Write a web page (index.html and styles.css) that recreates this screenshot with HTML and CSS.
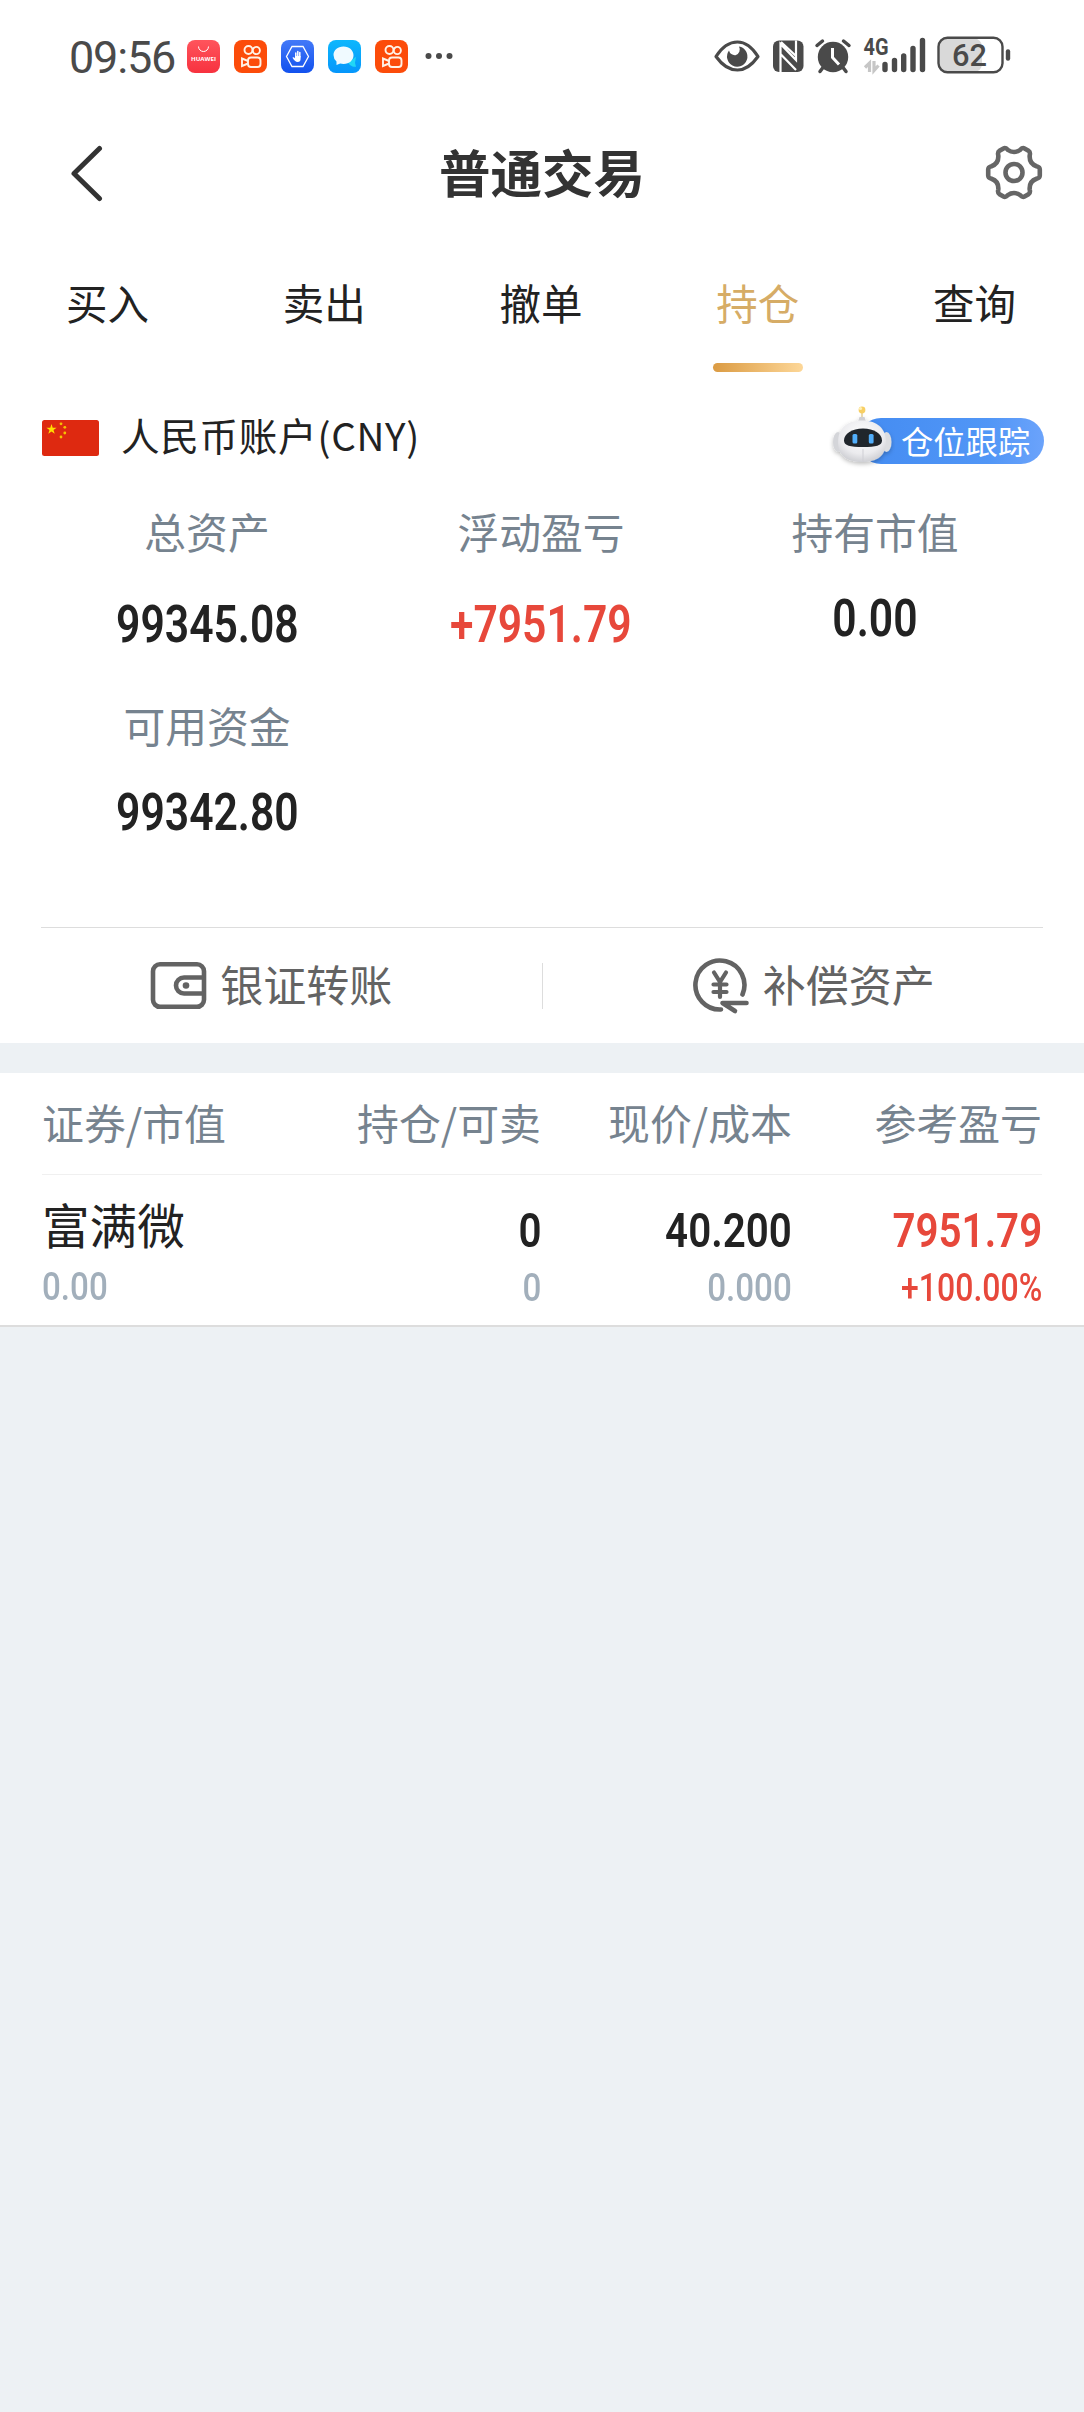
FILE: index.html
```html
<!DOCTYPE html>
<html lang="zh-CN">
<head>
  <meta charset="UTF-8">
  <title>普通交易</title>
  <meta name="viewport" content="width=device-width, initial-scale=1.0">
  <link rel="stylesheet" href="styles.css">
</head>
<body>

  <!-- Status bar -->
  <div class="status-bar">
    <span class="time">09:56</span>
    <div class="apps">
      <svg width="33" height="33" viewBox="0 0 33 33">
        <defs><linearGradient id="hw" x1="0" y1="0" x2="0" y2="1"><stop offset="0" stop-color="#ff545c"/><stop offset="1" stop-color="#f7323f"/></linearGradient></defs>
        <rect width="33" height="33" rx="8" fill="url(#hw)"/>
        <path d="M11.5 6.500a5 5 0 0 0 10 0" fill="none" stroke="#fff" stroke-width="1"/>
        <text x="16.500" y="21" class="app-text" text-anchor="middle" textLength="25" lengthAdjust="spacingAndGlyphs">HUAWEI</text>
      </svg>
      <svg width="33" height="33" viewBox="0 0 33 33">
        <rect width="33" height="33" rx="8" fill="#fc4c0a"/>
        <g fill="none" stroke="#fff2e6" stroke-width="1.900"><circle cx="14.500" cy="10" r="4"/><circle cx="22.300" cy="10.500" r="3.600"/><rect x="14" y="17.500" width="12.500" height="9.500" rx="3"/><path d="M14 21l-6-2.500v7.500l6-2.500"/></g>
      </svg>
      <svg width="33" height="33" viewBox="0 0 33 33">
        <defs><linearGradient id="hd" x1="0" y1="0" x2="0" y2="1"><stop offset="0" stop-color="#4379f8"/><stop offset="1" stop-color="#1251ee"/></linearGradient></defs>
        <rect width="33" height="33" rx="8" fill="url(#hd)"/>
        <path d="M11 6.500h11l5.500 10-5.500 10H11l-5.500-10z" fill="none" stroke="#fff" stroke-width="1.300"/>
        <path d="M14.800 17v-4M16.800 16v-4.500M18.800 17v-4.500" stroke="#fff" stroke-width="1.500" stroke-linecap="round"/>
        <path d="M14 16h5.600v3c0 2-1 3-2.800 3-2.200 0-3.800-1.800-5.300-4.300 1-.8 1.700-.2 2.500.6z" fill="#fff"/>
      </svg>
      <svg width="33" height="33" viewBox="0 0 33 33">
        <defs><linearGradient id="ms" x1="0" y1="0" x2="0" y2="1"><stop offset="0" stop-color="#0db7fd"/><stop offset="1" stop-color="#0596fb"/></linearGradient></defs>
        <rect width="33" height="33" rx="8" fill="url(#ms)"/>
        <path d="M22 25c2 1.500 4 2 6 1.800l-1-4 1-6-8 6z" fill="#21d6f6"/>
        <path d="M15.500 6.500c6 0 10 4 10 8.800s-4 8.700-10 8.700c-1.200 0-2.300-.2-3.300-.5L8.500 25v-3.500A8.700 8.700 0 0 1 5.500 15c0-4.700 4-8.500 10-8.500z" fill="#f0faff"/>
      </svg>
      <svg width="33" height="33" viewBox="0 0 33 33">
        <rect width="33" height="33" rx="8" fill="#fc4c0a"/>
        <g fill="none" stroke="#fff2e6" stroke-width="1.900"><circle cx="14.500" cy="10" r="4"/><circle cx="22.300" cy="10.500" r="3.600"/><rect x="14" y="17.500" width="12.500" height="9.500" rx="3"/><path d="M14 21l-6-2.500v7.500l6-2.500"/></g>
      </svg>
    </div>
    <svg class="more" width="28" height="8" viewBox="0 0 28 8"><g fill="#4a4a4a"><circle cx="3.500" cy="4" r="3"/><circle cx="14" cy="4" r="3"/><circle cx="24.500" cy="4" r="3"/></g></svg>
    <svg class="system" width="298" height="56" viewBox="0 -8 298 56">
      <!-- eye -->
      <path d="M2 20.500C8 11 15 6 23.500 6S38 11 44 20.500C38 29 32 34 23.500 34S8 29 2 20.500z" fill="none" stroke="#4a4a4a" stroke-width="3.200" stroke-linejoin="round"/>
      <path d="M15 14.500a10.200 10.200 0 1 0 10-4 6 6 0 0 1-3.500 8.700 6 6 0 0 1-6.500-4.700z" fill="#4a4a4a"/>
      <!-- nfc -->
      <rect x="59" y="4.500" width="30.500" height="31.500" rx="6" fill="#4a4a4a"/>
      <path d="M66.500 36V8l15.500 16V4.500M67 6l15 14M66.500 18l15.500 16" fill="none" stroke="#fff" stroke-width="2.200"/>
      <!-- alarm -->
      <circle cx="119" cy="21" r="15.200" fill="#4a4a4a"/>
      <path d="M103 9.500l5.500-4.500M135 9.500L129.500 5M109 31.500l-3 4M129 31.500l3 4" stroke="#4a4a4a" stroke-width="3.500" stroke-linecap="round"/>
      <path d="M118.500 12v9.500l6.500 7" fill="none" stroke="#fff" stroke-width="3"/>
      <!-- signal -->
      <text x="149.500" y="19" class="net" textLength="25" lengthAdjust="spacingAndGlyphs">4G</text>
      <path d="M155.500 36V27l-4.500 4.500M160 25v9.500l4.500-5" fill="none" stroke="#c6c6c6" stroke-width="3.200"/>
      <path d="M171 28.500v5M180.500 24.500v9M189.700 20v13.500M199 12.500v21M208.500 4.500v29" stroke="#4a4a4a" stroke-width="5.400" stroke-linecap="round"/>
      <!-- battery -->
      <rect x="225" y="2.500" width="43" height="33.500" rx="8" fill="#d9d9d9"/>
      <rect x="224.500" y="1.800" width="64" height="34.500" rx="9" fill="none" stroke="#4a4a4a" stroke-width="2.400"/>
      <path d="M294 15.500v7" stroke="#4a4a4a" stroke-width="4.400" stroke-linecap="round"/>
      <text x="238" y="30" class="battery" textLength="35" lengthAdjust="spacingAndGlyphs">62</text>
    </svg>
  </div>

  <!-- Title -->
  <div class="header">
    <svg width="34" height="60" viewBox="0 0 34 60"><path d="M30.500 5.500L5 30.500l25.500 25" fill="none" stroke="#333" stroke-width="5" stroke-linecap="round" stroke-linejoin="round"/></svg>
    <h1>普通交易</h1>
    <svg width="60" height="60" viewBox="0 0 60 60">
      <g fill="none" stroke="#666" stroke-width="4.600" stroke-linejoin="round">
        <path d="M19.500 5.500C21.500 4.400 22.500 5.500 24 7C27.500 9.600 32.500 9.600 36 7C37.500 5.500 38.500 4.400 40.500 5.500L44.500 7.800C46.500 9 46.200 10.500 45.700 12.500C45.300 18 47.500 21.500 52.500 23.200C54.500 23.800 55.800 24.200 55.800 26.500V32.500C55.800 34.800 54.500 35.200 52.500 35.800C47.500 37.500 45.300 41 45.700 46.500C46.200 48.500 46.500 50 44.500 51.200L40.500 53.500C38.500 54.600 37.500 53.500 36 52C32.500 49.400 27.500 49.400 24 52C22.500 53.500 21.500 54.600 19.500 53.500L15.500 51.200C13.500 50 13.800 48.500 14.300 46.500C14.700 41 12.500 37.500 7.500 35.800C5.500 35.200 4.200 34.800 4.200 32.500V26.500C4.200 24.200 5.500 23.800 7.500 23.200C12.500 21.500 14.700 18 14.300 12.500C13.800 10.500 13.500 9 15.500 7.800Z"/>
        <circle cx="30" cy="29.500" r="8.500"/>
      </g>
    </svg>
  </div>

  <!-- Tabs -->
  <div class="tabs">
    <div class="tab">买入</div>
    <div class="tab">卖出</div>
    <div class="tab">撤单</div>
    <div class="tab active">持仓</div>
    <div class="tab">查询</div>
  </div>

  <!-- Account -->
  <div class="account">
    <svg width="57" height="36" viewBox="0 0 57 36">
      <rect width="57" height="36" rx="2.500" fill="#de2910"/>
      <path d="M9.500 4l1.200 3.700h3.900l-3.100 2.300 1.200 3.800-3.200-2.300-3.200 2.300 1.200-3.800-3.100-2.300h3.900z" fill="#ffde00"/>
      <g fill="#f5c400"><circle cx="19" cy="3.800" r="1.400"/><circle cx="22.800" cy="7.300" r="1.400"/><circle cx="22.800" cy="13" r="1.400"/><circle cx="19" cy="17" r="1.400"/></g>
    </svg>
    <span class="account-name">人民币账户(CNY)</span>
    <div class="track">
      <svg class="robot" width="66" height="70" viewBox="0 0 66 70">
        <defs>
          <radialGradient id="head" cx=".5" cy=".35" r=".7"><stop offset="0" stop-color="#fff"/><stop offset=".65" stop-color="#ebebee"/><stop offset="1" stop-color="#c8c9ce"/></radialGradient>
          <filter id="soft" x="-20%" y="-20%" width="140%" height="150%"><feDropShadow dx="0" dy="2" stdDeviation="2" flood-opacity=".25"/></filter>
        </defs>
        <g filter="url(#soft)">
          <ellipse cx="9" cy="39" rx="5" ry="10" fill="#d4d5d9"/>
          <ellipse cx="57.500" cy="39" rx="5" ry="10" fill="#dcdde0"/>
          <path d="M29 19l1.500-5h5l1.500 5z" fill="#d0d0d4"/>
          <path d="M33 17.500c16 0 24 9 24 21.500 0 14-9 20-24 20S9 53 9 39c0-12.500 8-21.500 24-21.500z" fill="url(#head)"/>
        </g>
        <path d="M33 10v4" stroke="#e9d9b0" stroke-width="2"/>
        <circle cx="33" cy="7" r="3.400" fill="#f8cf63"/><circle cx="31.500" cy="5.500" r="1.600" fill="#fff0b8"/>
        <path d="M34 25.500c11 0 19 5 19 12 0 5-6 6.500-19 6.500s-19-1.500-19-6.500c0-7 8-12 19-12z" fill="#20262c"/>
        <rect x="23.500" y="31" width="4.800" height="9.500" rx="1.500" fill="#51aefb"/><rect x="39.800" y="31" width="4.800" height="9.500" rx="1.500" fill="#51aefb"/>
        <path d="M34 46v12.500" stroke="#cfcfd4" stroke-width="1"/>
      </svg>
      <span>仓位跟踪</span>
    </div>
  </div>

  <!-- Summary -->
  <div class="summary">
    <div class="item">
      <div class="label">总资产</div>
      <div class="value"><span class="num">99345.08</span></div>
    </div>
    <div class="item">
      <div class="label">浮动盈亏</div>
      <div class="value red"><span class="num">+7951.79</span></div>
    </div>
    <div class="item tight">
      <div class="label">持有市值</div>
      <div class="value"><span class="num">0.00</span></div>
    </div>
    <div class="item tight">
      <div class="label">可用资金</div>
      <div class="value"><span class="num">99342.80</span></div>
    </div>
  </div>

  <!-- Actions -->
  <div class="divider"></div>
  <div class="actions">
    <div class="action">
      <svg width="58" height="58" viewBox="0 0 58 58">
        <g fill="none" stroke="#636363" stroke-width="4.600"><rect x="4" y="7.300" width="51" height="42.500" rx="7"/><path d="M54.500 20.500H35a8 8 0 0 0 0 16h19.500"/></g>
        <circle cx="37" cy="28.500" r="3.300" fill="#636363"/>
      </svg>
      <span>银证转账</span>
    </div>
    <div class="action">
      <svg width="58" height="58" viewBox="0 0 58 58">
        <g fill="none" stroke="#636363" stroke-width="4.600" stroke-linecap="round" stroke-linejoin="round">
          <path d="M29 52.500A24.500 24.500 0 1 1 50.500 37.500"/>
          <path d="M54.500 46H30.500l12.500 8"/>
          <path d="M22 15.500l6 9.500 6-9.500M28 25v15M21.500 27.500h13M21.500 35h13" stroke-width="4.200"/>
        </g>
      </svg>
      <span>补偿资产</span>
    </div>
  </div>

  <div class="band"></div>

  <!-- Positions -->
  <div class="positions">
    <div class="row head">
      <div>证券/市值</div>
      <div>持仓/可卖</div>
      <div>现价/成本</div>
      <div>参考盈亏</div>
    </div>
    <div class="row">
      <div class="cell">
        <div class="name">富满微</div>
        <div class="sub"><span class="num">0.00</span></div>
      </div>
      <div class="cell">
        <div class="main"><span class="num">0</span></div>
        <div class="sub"><span class="num">0</span></div>
      </div>
      <div class="cell">
        <div class="main"><span class="num">40.200</span></div>
        <div class="sub"><span class="num">0.000</span></div>
      </div>
      <div class="cell red">
        <div class="main"><span class="num">7951.79</span></div>
        <div class="sub"><span class="num">+100.00%</span></div>
      </div>
    </div>
  </div>

</body>
</html>
```

FILE: styles.css
```css
* {
  box-sizing: border-box;
}

body {
  margin: 0;
  min-height: 2412px;
  font-family: "Noto Sans CJK SC", sans-serif;
  background: #edf1f4;
  color: #222;
}

svg {
  display: block;
  flex-shrink: 0;
}

.status-bar, .header, .tabs, .account, .summary, .actions, .positions {
  background: #fff;
}

/* status bar */
.status-bar {
  display: flex;
  align-items: center;
  height: 112px;
  padding: 0 72px 0 69px;
}

.time {
  width: 118px;
  margin-top: 4px;
  font: 400 45px/60px Roboto, sans-serif;
  letter-spacing: -1.200px;
  color: #4a4a4a;
}

.apps {
  display: flex;
  gap: 14px;
}

.more {
  margin-left: 17px;
}

.system {
  margin-left: auto;
}

.app-text {
  font: 700 6px "Open Sans", sans-serif;
  fill: #fff;
}

.net {
  font: 700 24px Roboto, sans-serif;
  fill: #4a4a4a;
}

.battery {
  font: 500 32px Roboto, sans-serif;
  fill: #4a4a4a;
}

/* title */
.header {
  display: flex;
  justify-content: space-between;
  align-items: center;
  height: 122px;
  padding: 0 40px 0 69px;
}

.header h1 {
  margin: 0 0 5px -3px;
  font-size: 51.500px;
  font-weight: 700;
  line-height: 60px;
  color: #333;
}

/* tabs */
.tabs {
  display: grid;
  grid-template-columns: repeat(5, 1fr);
  height: 138px;
}

.tab {
  position: relative;
  padding-right: 2px;
  font-size: 41.500px;
  line-height: 137px;
  text-align: center;
}

.tab.active {
  color: #d6ac66;
}

.tab.active::after {
  content: "";
  position: absolute;
  left: 50%;
  bottom: 0;
  width: 90px;
  height: 9px;
  margin-left: -46px;
  border-radius: 5px;
  background: linear-gradient(90deg, #db9b43, #fdd798);
}

/* account */
.account {
  display: flex;
  align-items: center;
  height: 132px;
  padding: 0 40px 0 42px;
}

.account-name {
  margin: 0 0 8px 22px;
  font-size: 38.600px;
  line-height: 56px;
  letter-spacing: 0.7px;
}

.track {
  position: relative;
  width: 186px;
  height: 46px;
  margin: 6px 0 0 auto;
  padding-left: 43px;
  border-radius: 23px;
  background: linear-gradient(90deg, #448cf2, #5196f6 70%, #6ba3fb);
  font-size: 32.300px;
  line-height: 44px;
  color: #fff;
  white-space: nowrap;
}

.robot {
  position: absolute;
  left: -29px;
  top: -15px;
}

/* summary */
.summary {
  display: grid;
  grid-template-columns: repeat(3, 1fr);
  row-gap: 35px;
  padding: 0 42px 76px 40px;
  text-align: center;
}

.label {
  font-size: 41.800px;
  line-height: 54px;
  color: #76838f;
}

.value {
  height: 78px;
  margin-top: 27px;
  font-size: 52px;
  line-height: 80px;
}

.tight .value {
  margin-top: 21px;
}

/* narrow digits */
.num {
  display: inline-block;
  font-family: Roboto, sans-serif;
  font-weight: 600;
  line-height: inherit;
  vertical-align: top;
  transform: scaleX(0.82);
}

.red, .red .sub {
  color: #e7483b;
}

/* actions */
.divider {
  height: 1px;
  border-left: 41px solid #fff;
  border-right: 41px solid #fff;
  background: #ddd;
}

.actions {
  display: flex;
  align-items: center;
  height: 115px;
}

.action {
  display: flex;
  flex: 1;
  align-items: center;
  justify-content: center;
  gap: 13px;
  height: 46px;
  font-size: 43px;
  line-height: 46px;
  color: #636363;
}

.action span {
  margin-top: -5px;
}

.action + .action {
  border-left: 1px solid #ddd;
}

.band {
  height: 30px;
}

/* positions */
.positions {
  padding: 0 42px;
  border-bottom: 2px solid #ddd;
}

.row {
  display: grid;
  grid-template-columns: 248px 251px 251px 250px;
  height: 150px;
  text-align: right;
}

.row > :first-child {
  text-align: left;
}

.row.head {
  height: 102px;
  border-bottom: 1px solid #f0f0f0;
  font-size: 41.900px;
  line-height: 98px;
  color: #76838f;
}

.name {
  margin: 19px 0 6px;
  font-size: 47.600px;
  line-height: 60px;
}

.main {
  margin-top: 25px;
  font-size: 48px;
  line-height: 61px;
}

.sub {
  font-size: 39.500px;
  line-height: 53px;
  color: #a2afbb;
}

.cell .num {
  transform: scaleX(0.84);
  transform-origin: right;
}

.cell .sub .num {
  font-weight: 500;
}

.red .sub .num {
  transform: scaleX(0.81);
}

.cell:first-child .num {
  transform-origin: left;
}
```
